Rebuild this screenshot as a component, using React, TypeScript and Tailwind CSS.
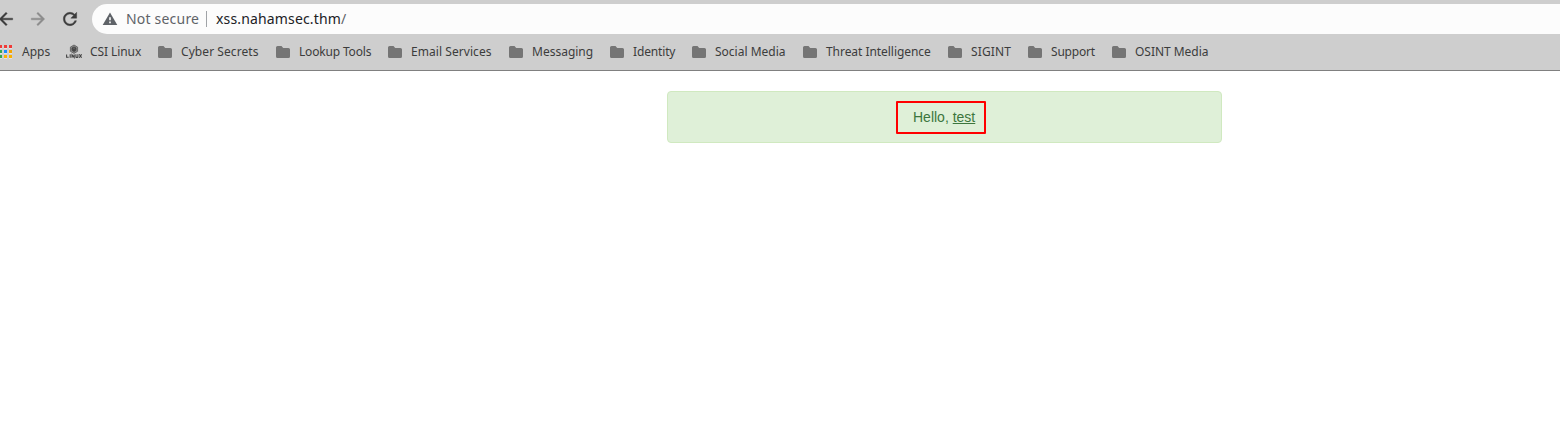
const bookmarks = [
  { label: 'Cyber Secrets', width: 'w-[118px]', tracking: 'tracking-[0.07px]' },
  { label: 'Lookup Tools', width: 'w-[112px]', tracking: 'tracking-[-0.17px]' },
  { label: 'Email Services', width: 'w-[121px]', tracking: 'tracking-[0.06px]' },
  { label: 'Messaging', width: 'w-[101px]', tracking: 'tracking-normal' },
  { label: 'Identity', width: 'w-[82px]', tracking: 'tracking-[-0.15px]' },
  { label: 'Social Media', width: 'w-[111px]', tracking: 'tracking-normal' },
  { label: 'Threat Intelligence', width: 'w-[145px]', tracking: 'tracking-[-0.05px]' },
  { label: 'SIGINT', width: 'w-[80px]', tracking: 'tracking-[0.12px]' },
  { label: 'Support', width: 'w-[84px]', tracking: 'tracking-[-0.2px]' },
  { label: 'OSINT Media', width: 'w-[100px]', tracking: 'tracking-[-0.03px]' },
];

function AppsIcon() {
  const rows = [
    { y: 1, fills: ['#f03a37', '#f03a37', '#f03a37'] },
    { y: 6, fills: ['#34a853', '#1a8cff', '#f5a400'] },
    { y: 11, fills: ['#34a853', '#fbb000', '#fbb000'] },
  ];
  const columns = [1, 6, 11];
  return (
    <svg width="16" height="16" viewBox="0 0 16 16" className="shrink-0">
      {rows.map((row) =>
        row.fills.map((fill, i) => (
          <g key={`${row.y}-${i}`}>
            <rect x={columns[i]} y={row.y} width="3" height="3" fill={fill} />
            <rect x={columns[i]} y={row.y + 3} width="3" height="1" fill="#e2e2e2" />
          </g>
        )),
      )}
    </svg>
  );
}

function CsiIcon() {
  return (
    <svg width="16" height="16" viewBox="0 0 16 16" className="shrink-0" fill="none">
      <path d="M8 1l3.6 2.1v4.2L8 9.4 4.4 7.3V3.1z" fill="#8a8a8a" stroke="#5a5a5a" strokeWidth=".8" />
      <path d="M6 4l2-1.1L10 4v2.3L8 7.5 6 6.3zM8 5v2.5M6 4l2 1 2-1" fill="#555555" stroke="#383838" strokeWidth=".6" />
      <path
        d="M.6 10.6v2.7h2.1M4.2 10.3v3.4M6 13.7v-2.9l2.2 2.6v-2.9M9.9 10.3v2.6q0 .5.6.5h.8q.6 0 .6-.5v-2.6M13.2 10.3l2.4 3.4M15.6 10.3l-2.4 3.4"
        stroke="#444444"
        strokeWidth="1.1"
      />
    </svg>
  );
}

function FolderIcon() {
  return (
    <svg width="16" height="16" viewBox="0 0 16 16" className="shrink-0">
      <path d="M2.5 2h4L8.2 4h5.3Q15 4 15 5.5v7Q15 14 13.5 14h-11Q1 14 1 12.5v-9Q1 2 2.5 2z" fill="#757575" />
    </svg>
  );
}

export default function App() {
  return (
    <div className="h-[432px] w-full overflow-hidden bg-white font-['Noto_Sans',sans-serif]">
      <header className="flex h-[71px] flex-col overflow-hidden border-b border-[#808080] bg-[#cecece] pt-1">
        <div className="flex h-[30px] shrink-0">
          <nav className="-ml-1 flex w-24 shrink-0 items-center gap-3">
            <svg width="20" height="20" viewBox="0 0 24 24" fill="#3c3c3c" stroke="#3c3c3c" strokeWidth=".5" className="shrink-0">
              <path d="M20 11H7.83l5.59-5.59L12 4l-8 8 8 8 1.41-1.41L7.83 13H20v-2z" />
            </svg>
            <svg width="20" height="20" viewBox="0 0 24 24" fill="#8c8c8c" stroke="#8c8c8c" strokeWidth=".5" className="shrink-0">
              <path d="M12 4l-1.41 1.41L16.17 11H4v2h12.17l-5.58 5.59L12 20l8-8z" />
            </svg>
            <svg width="20" height="20" viewBox="0 0 24 24" fill="#3c3c3c" stroke="#3c3c3c" strokeWidth=".5" className="shrink-0">
              <path d="M17.65 6.35C16.2 4.9 14.21 4 12 4c-4.42 0-7.99 3.58-7.99 8s3.57 8 7.99 8c3.73 0 6.84-2.55 7.73-6h-2.08c-.82 2.33-3.04 4-5.65 4-3.31 0-6-2.69-6-6s2.69-6 6-6c1.66 0 3.14.69 4.22 1.78L13 11h7V4l-2.35 2.35z" />
            </svg>
          </nav>
          <div className="flex flex-1 items-center rounded-l-full bg-[#fcfcfc] pl-2.5 text-sm text-[#5f6368]">
            <svg width="16" height="16" viewBox="0 0 16 16" className="mr-2 shrink-0">
              <path d="M8 1.4L15.3 14H.7z" fill="#5f6368" />
              <path d="M7.2 6.3h1.6v3H7.2zM7.2 10.6h1.6v1.6H7.2z" fill="#fcfcfc" />
            </svg>
            <span className="w-20 shrink-0 tracking-[0.2px] whitespace-nowrap">Not secure</span>
            <span className="mr-[9px] h-4 w-px bg-[#a0a3a7]" />
            <span className="tracking-[0.15px] whitespace-nowrap">
              <span className="text-[#202124]">xss.nahamsec.thm</span>/
            </span>
          </div>
        </div>
        <div className="-ml-0.5 flex h-9 shrink-0 items-center whitespace-nowrap text-xs text-[#3c3c3c]">
          <div className="flex w-[68px] shrink-0 items-center gap-2">
            <AppsIcon />
            <span>Apps</span>
          </div>
          <div className="flex w-[91px] shrink-0 items-center gap-2">
            <CsiIcon />
            <span className="tracking-[-0.08px]">CSI Linux</span>
          </div>
          {bookmarks.map((b) => (
            <div key={b.label} className={`flex shrink-0 items-center gap-2 ${b.width} ${b.tracking}`}>
              <FolderIcon />
              <span>{b.label}</span>
            </div>
          ))}
        </div>
      </header>
      <main className="pt-5 pl-[667px]">
        <div className="flex h-[52px] w-[555px] justify-center rounded border border-[#d0e9c0] bg-[#dff0d8] pt-[9px] font-['Liberation_Sans',Arial,sans-serif] text-sm leading-5 text-[#3c763d]">
          <div className="mr-[7px] h-[33px] w-[90px] rounded-[1px] border-2 border-[#ff0000] pt-1 pl-[15px] whitespace-nowrap">
            Hello, <u>test</u>
          </div>
        </div>
      </main>
    </div>
  );
}
